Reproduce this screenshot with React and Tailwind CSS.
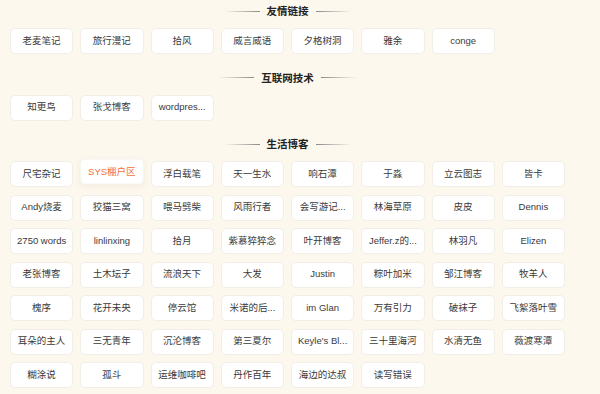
const sections = [
  {
    title: "友情链接",
    links: ["老麦笔记", "旅行漫记", "拾风", "威言威语", "夕格树洞", "雅余", "conge"],
  },
  {
    title: "互联网技术",
    links: ["知更鸟", "张戈博客", "wordpres..."],
  },
  {
    title: "生活博客",
    links: [
      "尺宅杂记", "SYS棚户区", "浮白载笔", "天一生水", "响石潭", "于淼", "立云图志", "皆卡",
      "Andy烧麦", "狡猫三窝", "喂马劈柴", "风雨行者", "会写游记...", "林海草原", "皮皮", "Dennis",
      "2750 words", "linlinxing", "拾月", "紫慕猝猝念", "叶开博客", "Jeffer.z的...", "林羽凡", "Elizen",
      "老张博客", "土木坛子", "流浪天下", "大发", "Justin", "粽叶加米", "邹江博客", "牧羊人",
      "槐序", "花开未央", "停云馆", "米诺的后...", "im Glan", "万有引力", "破袜子", "飞絮落叶雪",
      "耳朵的主人", "三无青年", "沉沦博客", "第三夏尔", "Keyle's Bl...", "三十里海河", "水清无鱼", "薇渡寒潭",
      "糊涂说", "孤斗", "运维咖啡吧", "丹作百年", "海边的达叔", "读写错误",
    ],
  },
];

function Heading({ title }) {
  return (
    <div className="flex h-4 items-center justify-center gap-[7px]">
      <span className="h-px w-[36px] bg-gradient-to-r from-transparent to-[#8a8a8a]" />
      <h2 className="text-[10.5px] font-bold leading-4 text-[#222]">{title}</h2>
      <span className="h-px w-[36px] bg-gradient-to-l from-transparent to-[#8a8a8a]" />
    </div>
  );
}

function LinkCard({ name, active }) {
  return (
    <a
      className={
        active
          ? "flex h-[26px] -translate-y-[2.5px] items-center justify-center overflow-hidden whitespace-nowrap rounded-[5px] border border-[#f8f4ee] bg-white text-[9.5px] text-[#f2713a] shadow-[0_2px_6px_rgba(120,90,40,0.08)]"
          : "flex h-[26px] items-center justify-center overflow-hidden whitespace-nowrap rounded-[5px] border border-[#f2eee7] bg-white text-[9.5px] text-[#3a3a3a]"
      }
    >
      {name}
    </a>
  );
}

export default function App() {
  return (
    <div
      className="min-h-[394px] w-[600px] bg-[#fdf8ee] pt-[3px]"
      style={{ fontFamily: '"Liberation Sans", "Noto Sans CJK SC", sans-serif' }}
    >
      <div className="ml-[10px] flex w-[555px] flex-col gap-[15.5px]">
        {sections.map((s) => (
          <section key={s.title}>
            <Heading title={s.title} />
            <div className="mt-[9px] grid grid-cols-8 gap-x-[7px] gap-y-[7.5px]">
              {s.links.map((name) => (
                <LinkCard key={name} name={name} active={name === "SYS棚户区"} />
              ))}
            </div>
          </section>
        ))}
      </div>
    </div>
  );
}
